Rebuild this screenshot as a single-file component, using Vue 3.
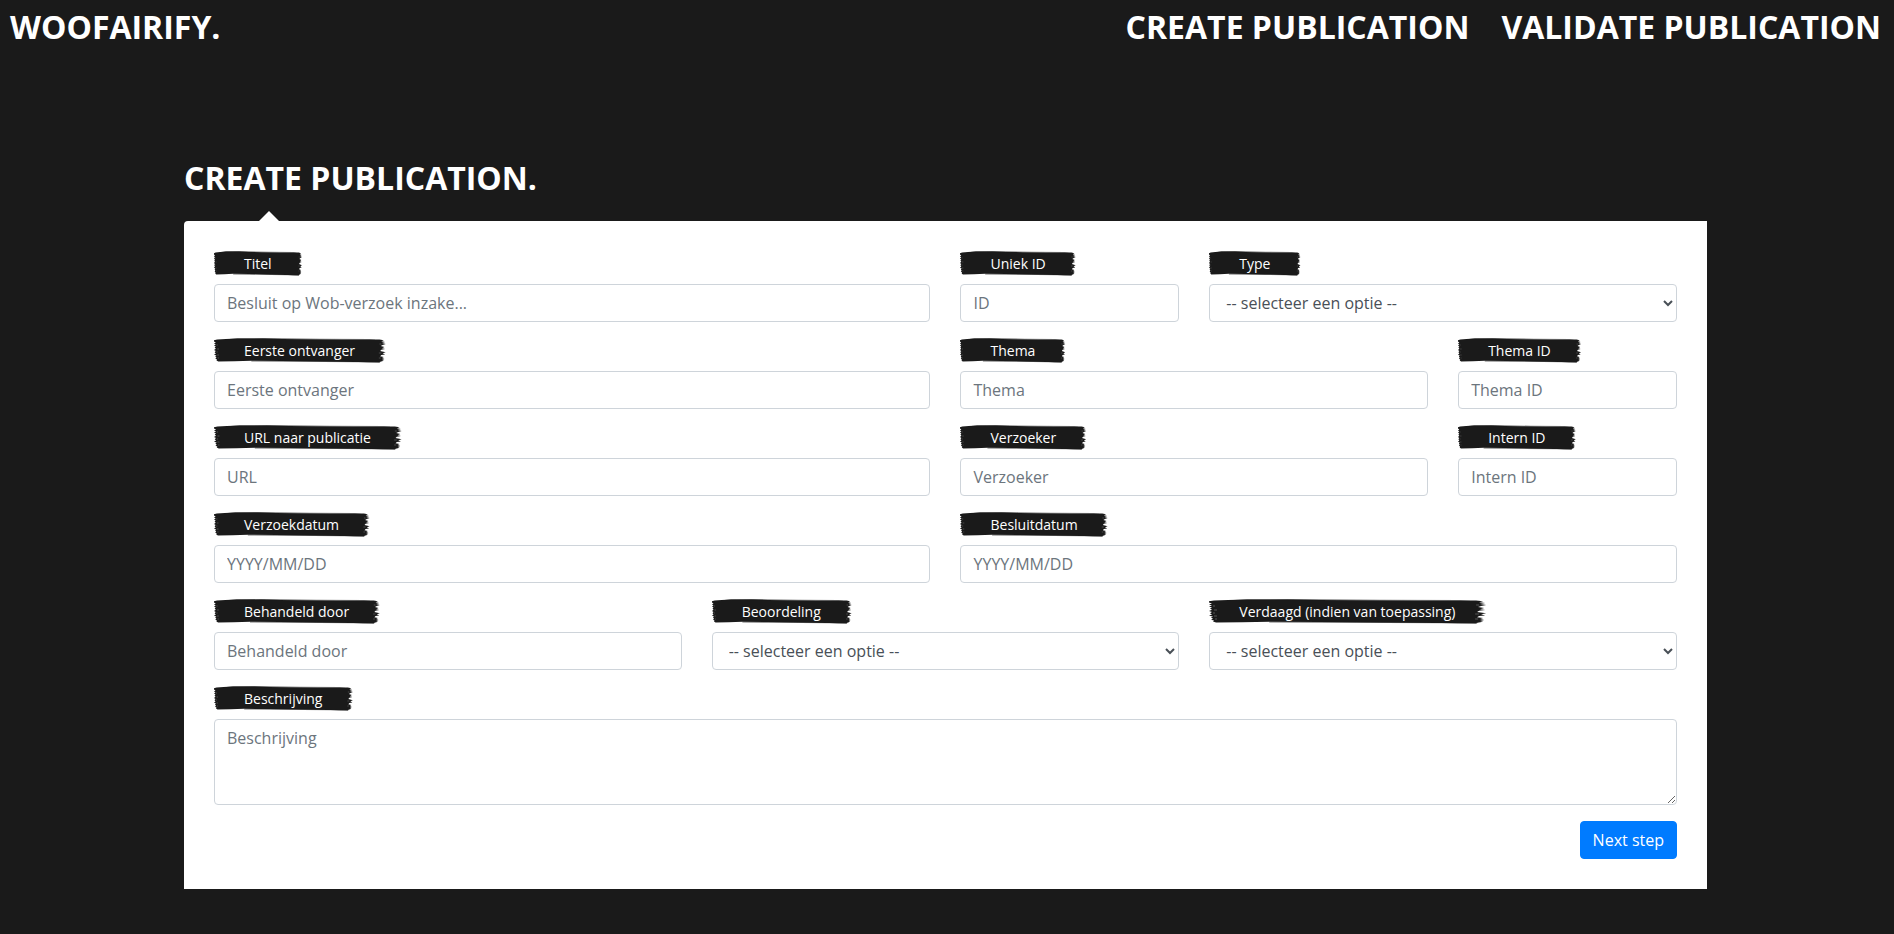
<script setup>
import { reactive } from 'vue'

const fields = [
  { id: 'titel', label: 'Titel', span: 3, placeholder: 'Besluit op Wob-verzoek inzake...' },
  { id: 'uniek-id', label: 'Uniek ID', span: 1, placeholder: 'ID' },
  { id: 'type', label: 'Type', span: 2, kind: 'select', options: ['Wob-verzoek', 'Woo-verzoek'] },
  { id: 'ontvanger', label: 'Eerste ontvanger', span: 3, placeholder: 'Eerste ontvanger' },
  { id: 'thema', label: 'Thema', span: 2, placeholder: 'Thema' },
  { id: 'thema-id', label: 'Thema ID', span: 1, placeholder: 'Thema ID' },
  { id: 'url', label: 'URL naar publicatie', span: 3, placeholder: 'URL' },
  { id: 'verzoeker', label: 'Verzoeker', span: 2, placeholder: 'Verzoeker' },
  { id: 'intern-id', label: 'Intern ID', span: 1, placeholder: 'Intern ID' },
  { id: 'verzoekdatum', label: 'Verzoekdatum', span: 3, placeholder: 'YYYY/MM/DD' },
  { id: 'besluitdatum', label: 'Besluitdatum', span: 3, placeholder: 'YYYY/MM/DD' },
  { id: 'behandeld', label: 'Behandeld door', span: 2, placeholder: 'Behandeld door' },
  { id: 'beoordeling', label: 'Beoordeling', span: 2, kind: 'select', options: ['Openbaar', 'Deels openbaar', 'Niet openbaar'] },
  { id: 'verdaagd', label: 'Verdaagd (indien van toepassing)', span: 2, kind: 'select', options: ['Ja', 'Nee'] },
  { id: 'beschrijving', label: 'Beschrijving', span: 6, kind: 'textarea', placeholder: 'Beschrijving' }
]

const values = reactive(Object.fromEntries(fields.map((f) => [f.id, ''])))
</script>

<template>
  <header class="topbar">
    <a class="brand" href="#">WOOFAIRIFY.</a>
    <nav class="links">
      <a href="#create">CREATE PUBLICATION</a>
      <a href="#validate">VALIDATE PUBLICATION</a>
    </nav>
  </header>

  <main class="content">
    <h1>CREATE PUBLICATION.</h1>
    <form class="card" @submit.prevent>
      <div v-for="f in fields" :key="f.id" class="field" :class="`span-${f.span}`">
        <label :for="f.id">
          <svg class="brush" viewBox="0 0 275 25" preserveAspectRatio="none" aria-hidden="true">
            <path
              class="ink"
              d="M0 2.2 L5 1.6 L19 1.1 L38 .4 L77 .5 L110 .9 L150 1.2 L205 1.5 L266 1.6 L273 2.3 L269 3.2 L275 4 L270 5 L276 6 L271 7 L268 8 L274 9 L270 10.2 L275 11 L269 11.8 L267 13 L276 14.2 L271 15.2 L275 16.4 L269 17 L267 18.2 L273 19 L270 20 L274 21 L270 22 L273 22.8 L266 24 L225 24 L170 23.4 L110 23 L60 22.8 L33 23.2 L7 23.6 L4 22.6 L5 21.5 L2 20.8 L4 19.8 L2 18.6 L4 17.6 L0 16.8 L3 15.5 L1 14.3 L3 13 L0 12.1 L3 10.8 L1 9.6 L3 8.5 L0 7.5 L3 6.5 L0 5.4 L3 4.4 L0 3.6 Z"
            />
            <path
              class="streak"
              d="M16 1.4 L38 .2 L80 .1 L170 .7 L250 1.1 L262 1.8 L150 1.6 L60 1.1 Z M60 22.4 L150 22.8 L268 23.4 L266 24.9 L248 24.8 L232 24.3 L120 23.7 L60 23.5 Z"
            />
            <path class="bristle" d="M4 7 h2 M5 11 h3 M4 14 h2 M5 17 h3 M6 20 h2 M266 6 h3 M265 15 h4 M265 20 h3" />
          </svg>
          <span>{{ f.label }}</span>
        </label>
        <select v-if="f.kind === 'select'" :id="f.id" v-model="values[f.id]" class="control">
          <option value="">-- selecteer een optie --</option>
          <option v-for="o in f.options" :key="o" :value="o">{{ o }}</option>
        </select>
        <textarea
          v-else-if="f.kind === 'textarea'"
          :id="f.id"
          v-model="values[f.id]"
          class="control area"
          rows="3"
          :placeholder="f.placeholder"
        ></textarea>
        <input v-else :id="f.id" v-model="values[f.id]" class="control" type="text" :placeholder="f.placeholder" />
      </div>
      <div class="actions">
        <button type="submit">Next step</button>
      </div>
    </form>
  </main>
</template>

<style>
body {
  margin: 0;
  background: #1a1a1a;
  font-family: "Open Sans", sans-serif;
}
</style>

<style scoped>
* {
  box-sizing: border-box;
}

.topbar {
  display: flex;
  justify-content: space-between;
  padding: 3px 13px 0 10px;
  font-size: 32px;
  font-weight: 700;
  line-height: 48px;
}

.topbar a {
  color: #fff;
  text-decoration: none;
}

.links {
  display: flex;
  gap: 32px;
}

.content {
  padding: 103px 187px 44px 184px;
}

h1 {
  margin: 0 0 19px;
  color: #fff;
  font-size: 32px;
  font-weight: 700;
  line-height: 48px;
}

.card {
  position: relative;
  display: grid;
  grid-template-columns: repeat(6, minmax(0, 1fr));
  gap: 16px 30px;
  padding: 30px;
  background: #fff;
  border-radius: 4px 0 0 0;
}

.card::before {
  content: "";
  position: absolute;
  top: -10px;
  left: 75px;
  border: 10px solid transparent;
  border-top: 0;
  border-bottom-color: #fff;
}

.field {
  display: flex;
  flex-direction: column;
  align-items: flex-start;
  gap: 8px;
}

.span-1 {
  grid-column: span 1;
}

.span-2 {
  grid-column: span 2;
}

.span-3 {
  grid-column: span 3;
}

.span-6,
.actions {
  grid-column: 1 / -1;
}

label {
  position: relative;
  padding: 2px 30px;
  color: #fff;
  font-size: 14px;
  line-height: 21px;
  white-space: nowrap;
}

label span {
  position: relative;
}

.brush {
  position: absolute;
  inset: 0;
  width: 100%;
  height: 100%;
  overflow: visible;
}

.ink {
  fill: #1a1a1a;
}

.streak {
  fill: #1a1a1a;
  opacity: 0.6;
}

.bristle {
  stroke: #fff;
  stroke-width: 1;
  opacity: 0.25;
}

.control {
  display: block;
  width: 100%;
  height: 38px;
  margin: 0;
  padding: 6px 12px;
  border: 1px solid #ced4da;
  border-radius: 4px;
  background: #fff;
  color: #495057;
  font-family: inherit;
  font-size: 16px;
  line-height: 24px;
}

.control::placeholder {
  color: #6c757d;
  opacity: 1;
}

.area {
  height: auto;
  resize: vertical;
}

.actions {
  display: flex;
  justify-content: flex-end;
}

button {
  padding: 6px 12px;
  border: 1px solid #007bff;
  border-radius: 4px;
  background: #007bff;
  color: #fff;
  font-family: inherit;
  font-size: 16px;
  line-height: 24px;
  cursor: pointer;
}
</style>
